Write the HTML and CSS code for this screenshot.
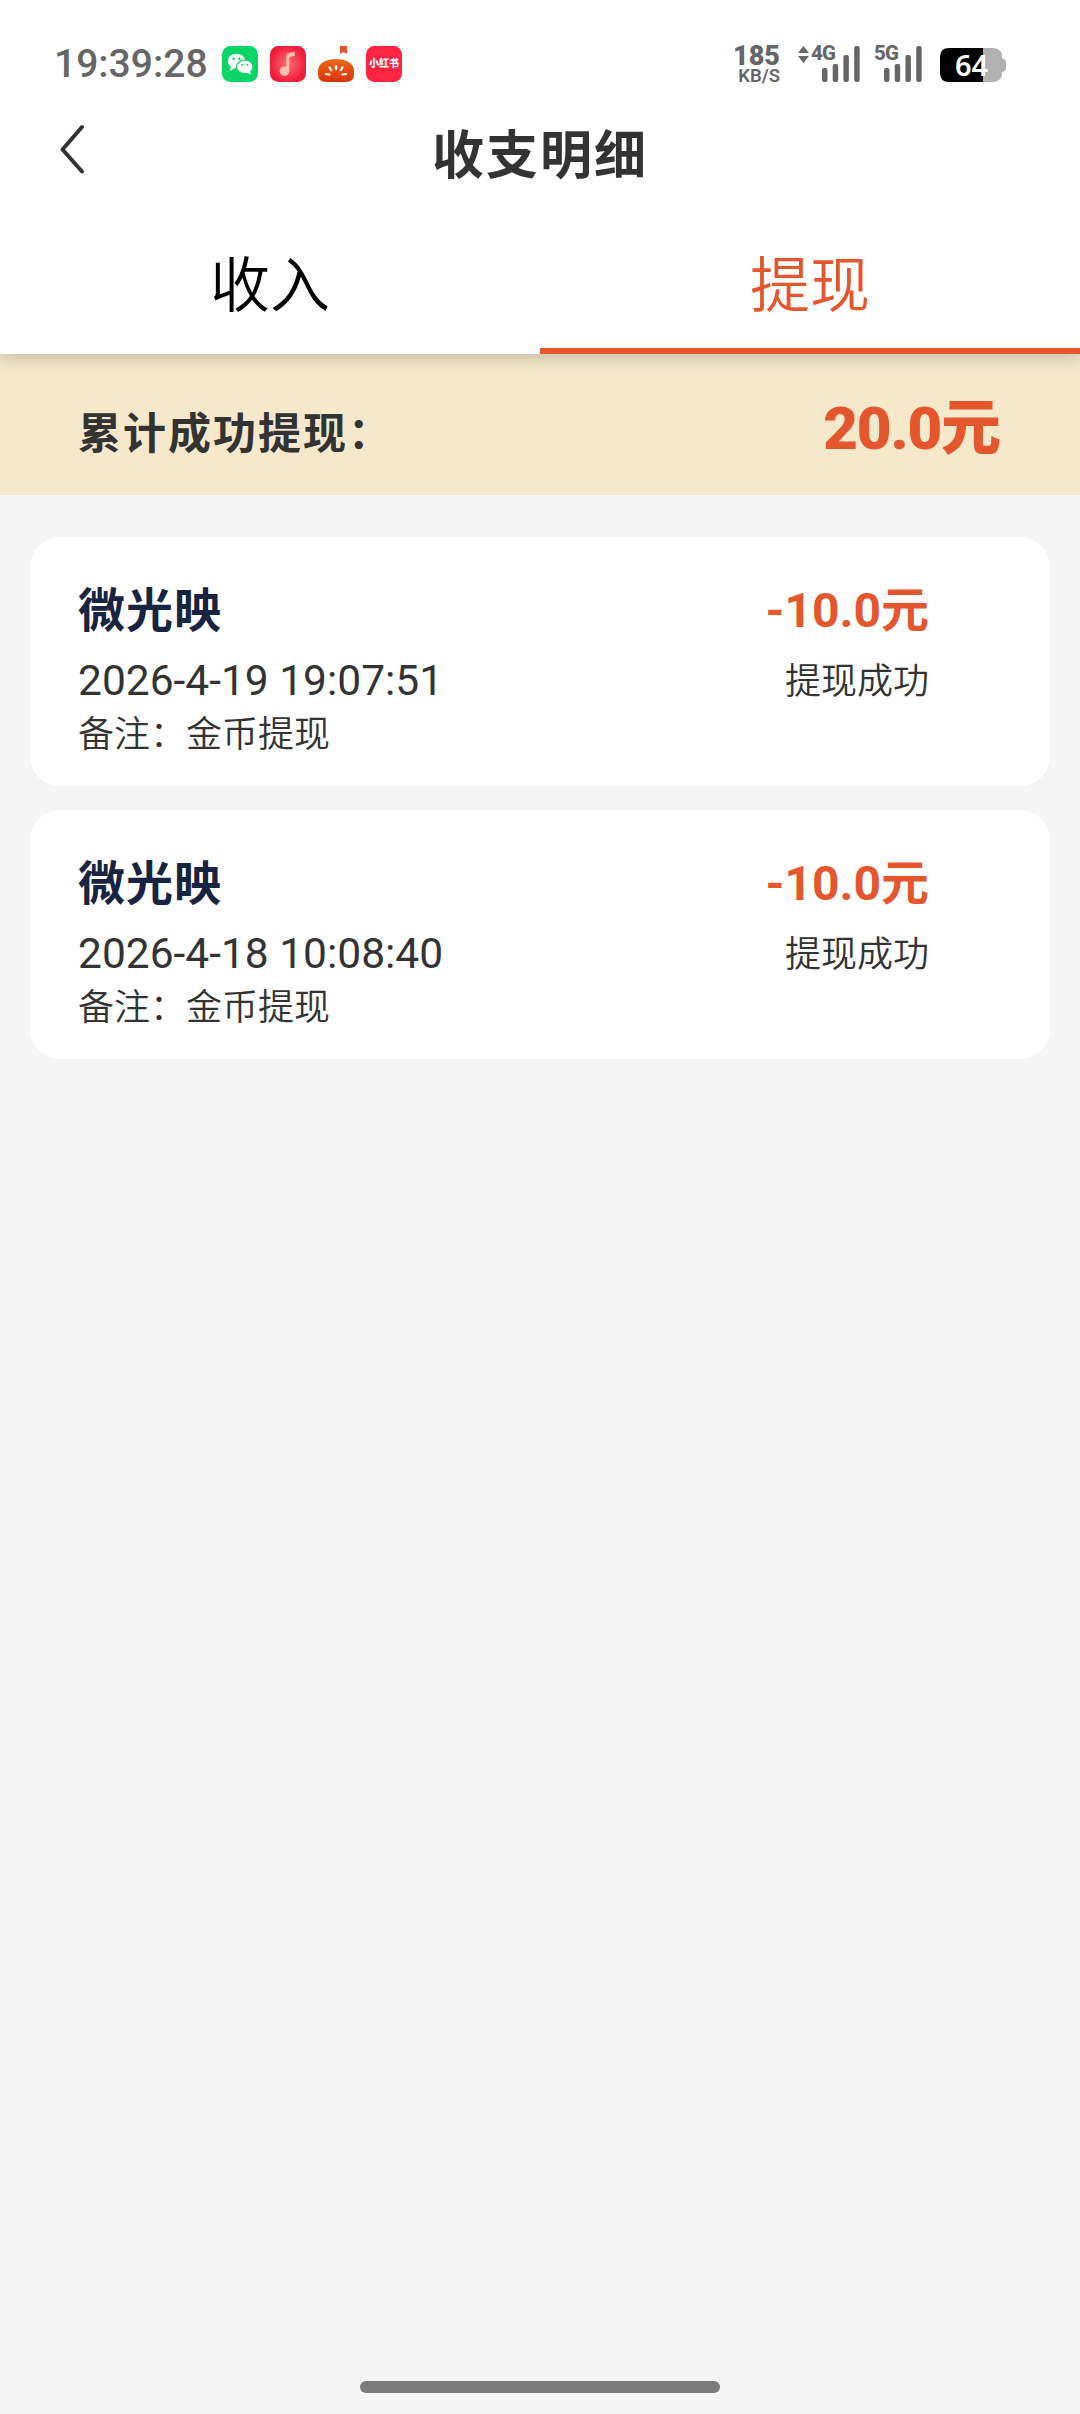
FILE: index.html
```html
<!DOCTYPE html>
<html lang="zh-CN">
<head>
<meta charset="utf-8">
<title>收支明细</title>
<link rel="stylesheet" href="styles.css">
</head>
<body>
<div class="screen">
  <header class="top">
    <div class="status">
      <div class="status-left">
        <span class="clock">19:39:28</span>
        <svg class="app" viewBox="0 0 36 36"><rect width="36" height="36" rx="8.5" fill="#0bd567"/><ellipse cx="14.5" cy="15" rx="8.8" ry="7.3" fill="#fff"/><path d="M9 20l-1 5 5-3z" fill="#fff"/><ellipse cx="22.8" cy="20.8" rx="8.3" ry="6.9" fill="#fff" stroke="#0bd567" stroke-width="1.2"/><path d="M25 27l4 1-1-4z" fill="#fff"/><g fill="#0bd567"><circle cx="11.6" cy="12.8" r="1.2"/><circle cx="17.4" cy="12.8" r="1.2"/><circle cx="20.2" cy="18.8" r="1"/><circle cx="25.4" cy="18.8" r="1"/></g></svg>
        <svg class="app" viewBox="0 0 36 36"><defs><radialGradient id="g1"><stop offset="0" stop-color="#ff6d70"/><stop offset="1" stop-color="#f01d3c"/></radialGradient></defs><rect width="36" height="36" rx="8.5" fill="url(#g1)"/><circle cx="14.500" cy="25.200" r="4.800" fill="#ffc0b4"/><path d="M16.300 25.500V10q0-2.500 2.500-3l6-1.200v4.200l-5.500 1.200v14.300z" fill="#ffc0b4"/></svg>
        <svg class="app" viewBox="0 0 36 36"><defs><linearGradient id="g2" x2="0" y2="1"><stop offset="0" stop-color="#ee6a1c"/><stop offset="1" stop-color="#d93206"/></linearGradient></defs><path d="M22 0h7v8l-3.500-2-3.500 2z" fill="#e2552e"/><path d="M0 25C0 17 8 13 18 13s18 4 18 12v3q0 8-8 8H8q-8 0-8-8z" fill="url(#g2)"/><path d="M18 20v3M11.500 21.500l1.800 2.700M24.500 21.500l-1.800 2.700M8 28l3.500.5M28 28l-3.500.5" stroke="#fff" stroke-width="2.200" stroke-linecap="round"/></svg>
        <span class="app note-app">小红书</span>
      </div>
      <div class="status-right">
        <div class="speed"><b>185</b><span>KB/S</span></div>
        <div class="network">
          <svg class="arrows" viewBox="0 0 11 17"><path d="M0 7L5.500 0 11 7zM0 10h11L5.500 17z"/></svg>
          <span class="gen">4G</span>
          <svg class="bars" viewBox="0 0 38 36"><rect y="22" width="5.500" height="14" rx="2"/><rect x="10.700" y="18" width="5.500" height="18" rx="2"/><rect x="21.400" y="9" width="5.500" height="27" rx="2"/><rect x="32.200" width="5.500" height="36" rx="2"/></svg>
        </div>
        <div class="network second">
          <span class="gen">5G</span>
          <svg class="bars" viewBox="0 0 38 36"><rect y="22" width="5.500" height="14" rx="2"/><rect x="10.700" y="18" width="5.500" height="18" rx="2"/><rect x="21.400" y="9" width="5.500" height="27" rx="2"/><rect x="32.200" width="5.500" height="36" rx="2"/></svg>
        </div>
        <div class="battery">
          <svg viewBox="0 0 66 34"><path d="M43 0H53q7 0 9 6.500V10q4 1 4 4v6q0 3-4 4v3.500Q60 34 53 34H43z" fill="#b1b1b1"/><path d="M43 0H9Q0 0 0 9v16q0 9 9 9h34z"/></svg>
          <span>64</span>
        </div>
      </div>
    </div>
    <div class="nav">
      <svg class="back" viewBox="0 0 30 52"><path d="M25 4L5.500 26.500 25 48.500"/></svg>
      <h1>收支明细</h1>
    </div>
    <nav class="tabs"><a class="tab">收入</a><a class="tab active">提现</a></nav>
  </header>
  <section class="total"><span>累计成功提现：</span><strong>20.0<i>元</i></strong></section>
  <main class="list">
    <article class="card">
      <div class="info"><h2>微光映</h2><time>2026-4-19 19:07:51</time><p>备注：金币提现</p></div>
      <div class="result"><strong>-10.0元</strong><span>提现成功</span></div>
    </article>
    <article class="card">
      <div class="info"><h2>微光映</h2><time>2026-4-18 10:08:40</time><p>备注：金币提现</p></div>
      <div class="result"><strong>-10.0元</strong><span>提现成功</span></div>
    </article>
  </main>
  <div class="home"></div>
</div>
</body>
</html>
```
FILE: styles.css
```css
* { box-sizing: border-box; margin: 0; padding: 0; }
body { background: #f5f5f5; font-family: Roboto, "Noto Sans CJK SC", sans-serif; color: #333; }
.screen { width: 1080px; height: 2414px; display: flex; flex-direction: column; background: #f5f5f5; }
.top { position: relative; z-index: 1; height: 354px; background: #fff; box-shadow: 0 3px 16px rgba(0,0,0,.22); display: flex; flex-direction: column; }
.status { height: 108px; padding: 44px 74px 0 54px; display: flex; justify-content: space-between; align-items: flex-start; color: #666; }
.status-left { display: flex; gap: 12px; padding-top: 2px; }
.clock { width: 156px; font-size: 39px; line-height: 36px; font-weight: 500; white-space: nowrap; }
.app { width: 36px; height: 36px; display: block; }
.note-app { background: #ff2442; border-radius: 8.500px; color: #fff; font-size: 10px; font-weight: 900; line-height: 36px; text-align: center; white-space: nowrap; }
.status-right { display: flex; }
.speed { width: 47px; height: 42px; display: flex; flex-direction: column; align-items: flex-end; font-weight: 700; margin-right: 18px; }
.speed b { font-size: 27px; line-height: 24px; }
.speed span { font-size: 18.500px; line-height: 17px; font-weight: 600; }
.network { display: flex; width: 62px; height: 38px; margin-right: 14px; }
.network.second { width: 48px; margin-right: 18px; }
.arrows { width: 11px; height: 17px; margin: 2px 2px 0 0; fill: #666; }
.gen { width: 24px; font-size: 20.500px; line-height: 19px; font-weight: 800; letter-spacing: -.8px; }
.bars { width: 38px; height: 36px; margin: 2px 0 0 -13px; fill: #666; flex: none; }
.second .bars { margin-left: -14px; }
.battery { width: 66px; height: 34px; margin-top: 4px; display: grid; }
.battery > * { grid-area: 1 / 1; }
.battery span { color: #fff; font-family: "Noto Sans", sans-serif; font-size: 29px; line-height: 34px; font-weight: 600; padding-left: 15px; }
.nav { height: 92px; display: grid; grid-template-columns: 58px 1fr 58px; padding: 0 54px; align-items: start; }
.back { width: 30px; height: 52px; margin: 15px 0 0 3px; fill: none; stroke: #333; stroke-width: 4; stroke-linecap: round; stroke-linejoin: round; }
h1 { font-size: 52px; line-height: 97px; letter-spacing: 2px; text-align: center; }
.tabs { flex: 1; display: grid; grid-template-columns: 1fr 1fr; }
.tab { text-align: center; font-size: 60px; line-height: 174px; height: 154px; color: #000; font-weight: 350; }
.tab.active { color: #e4572e; border-bottom: 6px solid #e4572e; }
.total { height: 141px; background: #f6e8cb; padding: 0 79px 0 78px; display: flex; justify-content: space-between; font-weight: 700; }
.total span { font-size: 43px; letter-spacing: 2px; line-height: 161px; }
.total strong { font-size: 60px; line-height: 149px; letter-spacing: -1.200px; color: #e4572e; }
.total i { font-style: normal; letter-spacing: 0; }
.list { padding: 42px 30px 0; display: flex; flex-direction: column; gap: 24px; flex: 1; }
.card { height: 249px; background: #fff; border-radius: 30px; padding: 39px 121px 0 48px; display: flex; justify-content: space-between; }
.info, .result { display: flex; flex-direction: column; }
.result { align-items: flex-end; }
h2 { font-size: 47px; letter-spacing: 1px; line-height: 70px; color: #172442; }
.info time { font-size: 42.500px; line-height: 70px; }
.info p { font-size: 36px; line-height: 39px; font-weight: 350; }
.result strong { font-size: 48px; line-height: 70px; color: #e4572e; }
.result span { font-size: 36px; line-height: 72px; font-weight: 350; }
.home { width: 360px; height: 12px; border-radius: 6px; background: #7c7c7c; margin: 0 auto 21px; }
```
